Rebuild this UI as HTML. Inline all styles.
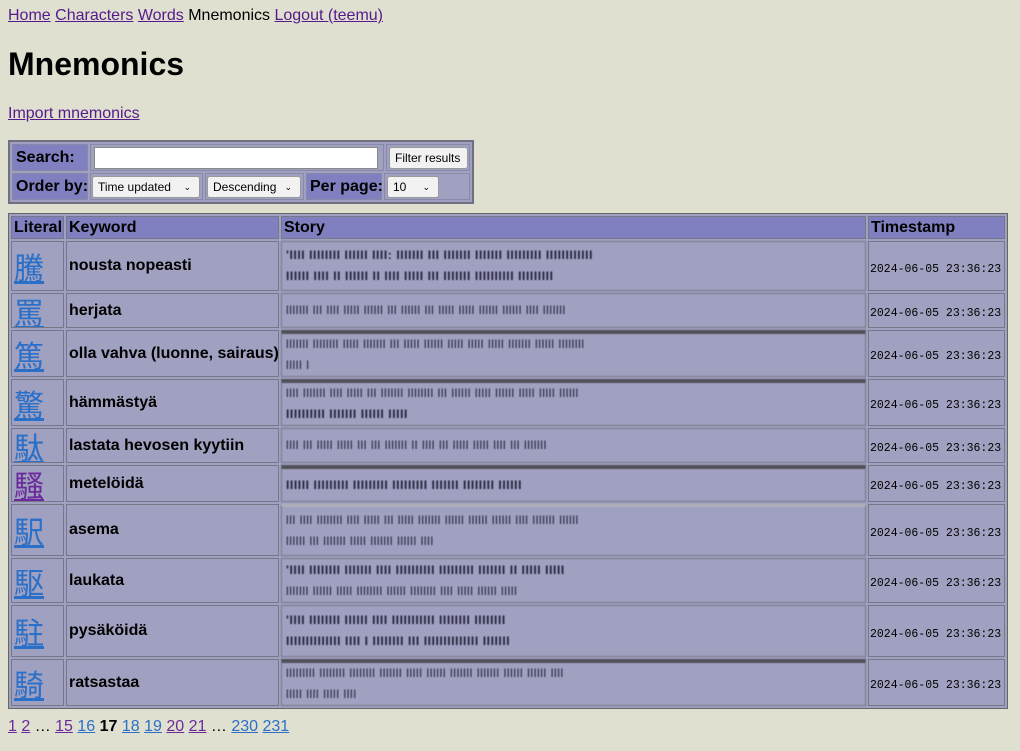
<!DOCTYPE html>
<html><head><meta charset="utf-8"><style>
body{margin:0;background:#e0e0d0;font-family:"Liberation Sans",Arial,sans-serif;font-size:16px;color:#000}
a{color:#551a8b}
.nav{position:absolute;left:8px;top:7px}
h1{position:absolute;left:8px;top:46px;margin:0;font-size:32px;font-weight:bold}
.imp{position:absolute;left:8px;top:105px}
.f{position:absolute;left:8px;top:140px;width:466px;height:64px;box-sizing:border-box;border:2px solid #707080;background:#a0a0c0}
.f div{position:absolute;box-sizing:border-box;border:1px solid #8888a8;background:#a0a0c0;height:27px;font-weight:bold;font-size:16px;line-height:25px;padding-left:3px;white-space:nowrap}
.f div.h{background:#8080c0}
.f input{position:absolute;left:3px;top:2px;width:284px;height:22px;border:1px solid #888;padding:0;margin:0;box-sizing:border-box}
.btn,.sel{position:absolute;top:2px;font-family:"Liberation Sans",sans-serif;font-size:12px;background:#f2f2f2;border:1px solid #999;border-radius:3px;height:22px;padding:0 5px;line-height:20px;font-weight:normal;box-sizing:border-box}
.sel span{font-size:9px;position:absolute;right:8px;top:0}
.m{position:absolute;left:8px;top:213px;width:1000px;border:1px solid #666;border-collapse:separate;border-spacing:2px;background:#a0a0c0;table-layout:fixed}
.m td,.m th{border:1px solid #77778a;background:#a0a0c0;padding:0 1px;text-align:left;vertical-align:middle;white-space:nowrap;overflow:hidden}
.m th{background:#8080c0;height:21px;font-size:16px;padding:0 2px}
.m td.k{font-weight:bold;font-size:16px;padding-left:2px}
.m td.l{font-size:30px;font-family:"Noto Sans CJK JP",sans-serif;line-height:32px;padding:0 2px}
.m td.l a{color:#2a6fc8}
.m td.l a.v{color:#6a2a9a}
.m td.t{font-family:"Liberation Mono",monospace;font-size:11.5px;padding-top:6px}
.m td.s{font-size:12px;font-weight:bold;color:#20203a;letter-spacing:0.6px;line-height:21px;filter:blur(0.5px);padding-left:4px}
.m td.s.b{border-top:4px solid #505058}
.p{position:absolute;left:8px;top:718px}
.p a{color:#2a6fc8}.p a.v{color:#6a2a9a}
</style></head><body>
<div class="nav"><a href="#">Home</a> <a href="#">Characters</a> <a href="#">Words</a> Mnemonics <a href="#">Logout (teemu)</a></div>
<h1>Mnemonics</h1>
<div class="imp"><a href="#">Import mnemonics</a></div>
<div class="f">
<div class="h" style="left:2px;top:2px;width:76px">Search:</div>
<div style="left:80px;top:2px;width:294px"><input></div>
<div style="left:376px;top:2px;width:84px"><span class="btn" style="left:2px;width:79px">Filter results</span></div>
<div class="h" style="left:2px;top:31px;width:76px">Order by:</div>
<div style="left:80px;top:31px;width:113px"><span class="sel" style="left:1px;width:108px">Time updated<span>&#8964;</span></span></div>
<div style="left:195px;top:31px;width:99px"><span class="sel" style="left:1px;width:94px">Descending<span>&#8964;</span></span></div>
<div class="h" style="left:296px;top:31px;width:76px">Per page:</div>
<div style="left:374px;top:31px;width:86px"><span class="sel" style="left:2px;width:52px">10<span>&#8964;</span></span></div>
</div>
<table class="m">
<colgroup><col style="width:53px"><col style="width:213px"><col style="width:585px"><col style="width:137px"></colgroup>
<tr><th>Literal</th><th>Keyword</th><th>Story</th><th>Timestamp</th></tr>
<tr style="height:50px"><td class="l"><a href="#">騰</a></td><td class="k">nousta nopeasti</td><td class="s">'IIII IIIIIIII IIIIII IIII: IIIIIII III IIIIIII IIIIIII IIIIIIIII IIIIIIIIIIII<br>IIIIII IIII II IIIIII II IIII IIIII III IIIIIII IIIIIIIIII IIIIIIIII</td><td class="t">2024-06-05 23:36:23</td></tr>
<tr style="height:35px"><td class="l"><a href="#">罵</a></td><td class="k">herjata</td><td class="s" style="font-weight:normal">lllllll lll llll lllll llllll lll llllll lll lllll lllll llllll llllll llll lllllll</td><td class="t">2024-06-05 23:36:23</td></tr>
<tr style="height:45px"><td class="l"><a href="#">篤</a></td><td class="k">olla vahva (luonne, sairaus)</td><td class="s b" style="font-weight:normal">lllllll llllllll lllll lllllll lll lllll llllll lllll lllll lllll lllllll llllll llllllll<br>lllll l</td><td class="t">2024-06-05 23:36:23</td></tr>
<tr style="height:45px"><td class="l"><a href="#">驚</a></td><td class="k">hämmästyä</td><td class="s b" style="font-weight:normal">llll lllllll llll lllll lll lllllll llllllll lll llllll lllll llllll lllll lllll llllll<br><b>IIIIIIIIII IIIIIII IIIIII IIIII</b></td><td class="t">2024-06-05 23:36:23</td></tr>
<tr style="height:35px"><td class="l"><a href="#">駄</a></td><td class="k">lastata hevosen kyytiin</td><td class="s" style="font-weight:normal">llll lll lllll lllll lll lll lllllll ll llll lll lllll lllll llll lll lllllll</td><td class="t">2024-06-05 23:36:23</td></tr>
<tr style="height:37px"><td class="l"><a class="v" href="#">騷</a></td><td class="k">metelöidä</td><td class="s b">IIIIII IIIIIIIII IIIIIIIII IIIIIIIII IIIIIII IIIIIIII IIIIII</td><td class="t">2024-06-05 23:36:23</td></tr>
<tr style="height:52px"><td class="l"><a href="#">駅</a></td><td class="k">asema</td><td class="s" style="font-weight:normal;border-top:3px solid #b0b0b8">lll llll llllllll llll lllll lll lllll lllllll llllll llllll llllll llll lllllll llllll<br>llllll lll lllllll lllll lllllll llllll llll</td><td class="t">2024-06-05 23:36:23</td></tr>
<tr style="height:45px"><td class="l"><a href="#">駆</a></td><td class="k">laukata</td><td class="s">'IIII IIIIIIII IIIIIII IIII IIIIIIIIII IIIIIIIII IIIIIII II IIIII IIIII<br><span style="font-weight:normal">lllllll llllll lllll llllllll llllll llllllll llll lllll llllll lllll</span></td><td class="t">2024-06-05 23:36:23</td></tr>
<tr style="height:52px"><td class="l"><a href="#">駐</a></td><td class="k">pysäköidä</td><td class="s">'IIII IIIIIIII IIIIII IIII IIIIIIIIIII IIIIIIII IIIIIIII<br>IIIIIIIIIIIIII IIII I IIIIIIII III IIIIIIIIIIIIII IIIIIII</td><td class="t">2024-06-05 23:36:23</td></tr>
<tr style="height:45px"><td class="l"><a href="#">騎</a></td><td class="k">ratsastaa</td><td class="s b" style="font-weight:normal">lllllllll llllllll llllllll lllllll lllll llllll lllllll lllllll llllll llllll llll<br>lllll llll lllll llll</td><td class="t">2024-06-05 23:36:23</td></tr>
</table>
<div class="p"><a class="v" href="#">1</a> <a class="v" href="#">2</a> … <a class="v" href="#">15</a> <a href="#">16</a> <b>17</b> <a href="#">18</a> <a href="#">19</a> <a class="v" href="#">20</a> <a class="v" href="#">21</a> … <a href="#">230</a> <a href="#">231</a></div>
</body></html>
